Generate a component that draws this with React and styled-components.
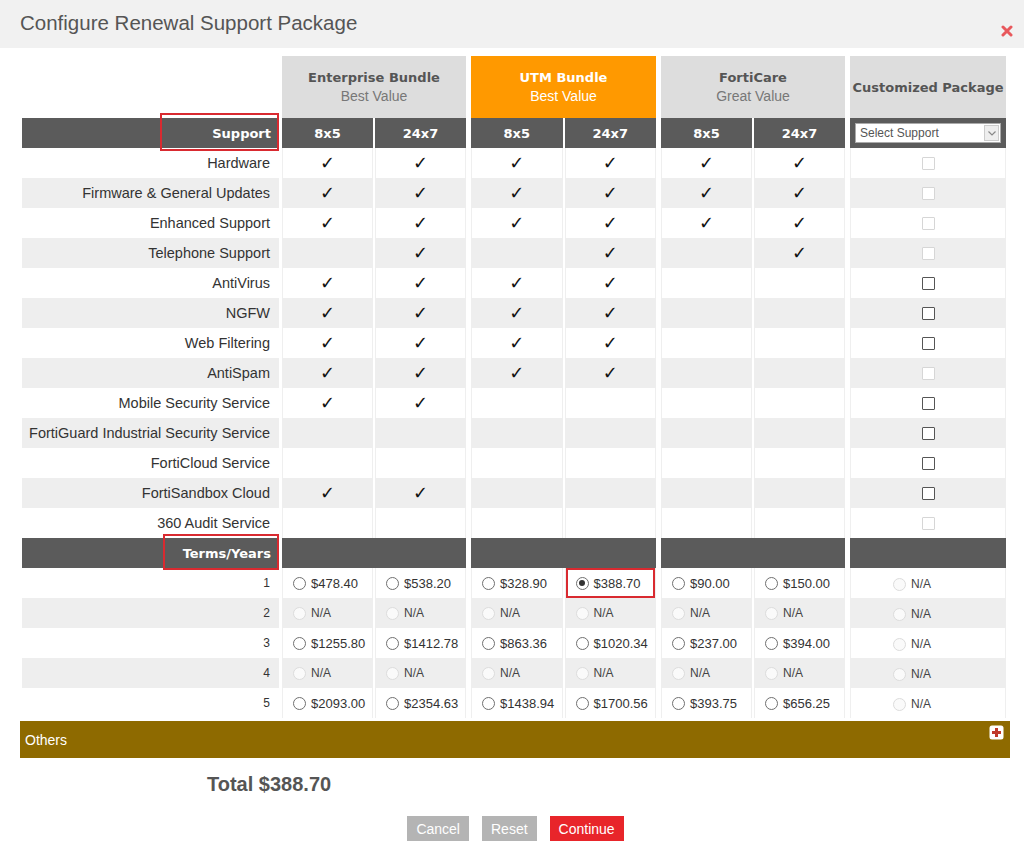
import styled, { createGlobalStyle } from 'styled-components'

const GlobalStyle = createGlobalStyle`
  body {
    margin: 0;
    background: #fff;
    font-family: "Liberation Sans", Arial, sans-serif;
  }
`

const tones = {
  none: 'transparent',
  white: '#ffffff',
  gray: '#eeeeee',
  dark: '#5b5b5b',
  head: '#dddddd',
  accent: '#ff9900',
}

const Dialog = styled.div`
  width: 1024px;
  height: 842px;
  overflow: hidden;
  background: #fff;
`

const TitleBar = styled.div`
  height: 48px;
  background: #f1f1f1;
  display: flex;
  justify-content: space-between;
  align-items: flex-start;
  padding: 0 11px 0 20px;
`

const Title = styled.h2`
  margin: 0;
  font-weight: normal;
  font-size: 20.5px;
  line-height: 46px;
  color: #555;
`

const CloseButton = styled.button`
  border: 0;
  background: none;
  padding: 0;
  margin-top: 25px;
  width: 12px;
  height: 12px;
  display: flex;
`

const Table = styled.div`
  display: flex;
  flex-direction: column;
  padding: 8px 0 0 22px;
`

const Row = styled.div`
  display: flex;
  gap: 3px;
  height: ${p => p.$h || 30}px;
`

const Groups = styled.div`
  display: flex;
  gap: 5px;
`

const Group = styled.div`
  display: flex;
  gap: 2px;
  width: ${p => p.$w}px;
`

const Label = styled.div`
  position: relative;
  width: 257px;
  box-sizing: border-box;
  padding-right: 9px;
  display: flex;
  align-items: center;
  justify-content: flex-end;
  white-space: nowrap;
  background: ${p => tones[p.$tone]};
  color: #333;
  font-size: ${p => (p.$small ? 12 : 14.5)}px;

  ${p => p.$tone === 'dark' && `
    color: #fff;
    font-family: "DejaVu Sans", Verdana, sans-serif;
    font-weight: bold;
    font-size: 13px;
    padding-right: 8px;
  `}
`

const Mark = styled.span`
  position: absolute;
  right: 0;
  top: ${p => p.$top}px;
  bottom: ${p => p.$bottom}px;
  width: ${p => p.$w}px;
  box-sizing: border-box;
  border: 2px solid #d92a30;
  z-index: 1;
  pointer-events: none;
`

const Cell = styled.div`
  flex: 1;
  box-sizing: border-box;
  display: flex;
  align-items: center;
  justify-content: ${p => (p.$left ? 'flex-start' : 'center')};
  padding-left: ${p => (p.$left ? p.$left : 0)}px;
  padding-top: ${p => p.$drop || 0}px;
  background: ${p => tones[p.$tone]};
  border-left: 1px solid ${p => (p.$tone === 'white' ? '#efefef' : 'transparent')};
  border-right: 1px solid ${p => (p.$tone === 'white' ? '#efefef' : 'transparent')};
  box-shadow: ${p => (p.$marked ? 'inset 0 0 0 2px #d92a30' : 'none')};
  color: #333;
  font-size: 13px;
`

const DarkText = styled.span`
  color: #fff;
  font-family: "DejaVu Sans", Verdana, sans-serif;
  font-weight: bold;
  font-size: 13px;
`

const GroupHead = styled.div`
  width: ${p => p.$w}px;
  display: flex;
  flex-direction: column;
  align-items: center;
  justify-content: center;
  gap: 3px;
  background: ${p => (p.$accent ? tones.accent : tones.head)};
`

const HeadName = styled.span`
  font-family: "DejaVu Sans", Verdana, sans-serif;
  font-weight: bold;
  font-size: 13px;
  color: ${p => (p.$accent ? '#fff' : '#555')};
`

const HeadSub = styled.span`
  font-size: 14px;
  color: ${p => (p.$accent ? '#fff' : '#777')};
`

const Check = styled.span`
  font-family: "DejaVu Sans", sans-serif;
  font-size: 18px;
  color: #111;
  line-height: 1;
`

const Box = styled.span`
  width: 13px;
  height: 13px;
  box-sizing: border-box;
  background: #fff;
  border: 1px solid ${p => (p.$off ? '#d6d6d6' : '#555')};
  border-radius: 1px;
`

const SelectBox = styled.div`
  width: 146px;
  height: 20px;
  box-sizing: border-box;
  display: flex;
  align-items: center;
  justify-content: space-between;
  background: #fff;
  border: 1px solid #aaa;
  padding-left: 4px;
  font-size: 12px;
  color: #555;
`

const SelectArrow = styled.span`
  width: 15px;
  height: 16px;
  margin-right: 1px;
  box-sizing: border-box;
  display: flex;
  align-items: center;
  justify-content: center;
  background: #eee;
  border: 1px solid #ccc;
`

const Radio = styled.span`
  position: relative;
  flex: none;
  width: 13px;
  height: 13px;
  box-sizing: border-box;
  border-radius: 50%;
  border: 1px solid ${p => (p.$off ? '#dcdcdc' : '#707070')};
  background: ${p => (p.$off ? '#fafafa' : '#fff')};
  margin-right: 5px;

  &::after {
    content: '';
    display: ${p => (p.$on ? 'block' : 'none')};
    position: absolute;
    left: 2.5px;
    top: 2.5px;
    width: 6px;
    height: 6px;
    border-radius: 50%;
    background: #333;
  }
`

const Price = styled.span`
  font-size: ${p => (p.$na ? 12 : 13)}px;
  color: ${p => (p.$na ? '#444' : '#333')};
`

const OthersBar = styled.div`
  margin: 3px 14px 0 20px;
  height: 37px;
  box-sizing: border-box;
  background: #8e6a00;
  display: flex;
  justify-content: space-between;
  align-items: center;
  padding: 0 6px 0 5px;
  color: #fff;
  font-size: 14px;
`

const PlusIcon = styled.span`
  align-self: flex-start;
  margin-top: 4px;
  display: flex;
`

const Total = styled.div`
  margin-top: 16px;
  padding-left: 207px;
  font-size: 20px;
  line-height: 20px;
  font-weight: bold;
  color: #555;
`

const Actions = styled.div`
  margin-top: 22px;
  padding-left: 7px;
  display: flex;
  justify-content: center;
  gap: 13px;
`

const Button = styled.button`
  height: 25px;
  border: 0;
  padding: 0 9px;
  font-family: inherit;
  font-size: 14px;
  color: #fff;
  background: ${p => (p.$primary ? '#e8252a' : '#b4b4b4')};
`

const bundles = [
  { name: 'Enterprise Bundle', sub: 'Best Value', w: 184 },
  { name: 'UTM Bundle', sub: 'Best Value', w: 185, accent: true },
  { name: 'FortiCare', sub: 'Great Value', w: 184 },
]

const features = [
  { name: 'Hardware', c: [[1, 1], [1, 1], [1, 1]], off: true },
  { name: 'Firmware & General Updates', c: [[1, 1], [1, 1], [1, 1]], off: true },
  { name: 'Enhanced Support', c: [[1, 1], [1, 1], [1, 1]], off: true },
  { name: 'Telephone Support', c: [[0, 1], [0, 1], [0, 1]], off: true },
  { name: 'AntiVirus', c: [[1, 1], [1, 1], [0, 0]] },
  { name: 'NGFW', c: [[1, 1], [1, 1], [0, 0]] },
  { name: 'Web Filtering', c: [[1, 1], [1, 1], [0, 0]] },
  { name: 'AntiSpam', c: [[1, 1], [1, 1], [0, 0]], off: true },
  { name: 'Mobile Security Service', c: [[1, 1], [0, 0], [0, 0]] },
  { name: 'FortiGuard Industrial Security Service', c: [[0, 0], [0, 0], [0, 0]] },
  { name: 'FortiCloud Service', c: [[0, 0], [0, 0], [0, 0]] },
  { name: 'FortiSandbox Cloud', c: [[1, 1], [0, 0], [0, 0]] },
  { name: '360 Audit Service', c: [[0, 0], [0, 0], [0, 0]], off: true },
]

const terms = [
  ['$478.40', '$538.20', '$328.90', '$388.70', '$90.00', '$150.00'],
  null,
  ['$1255.80', '$1412.78', '$863.36', '$1020.34', '$237.00', '$394.00'],
  null,
  ['$2093.00', '$2354.63', '$1438.94', '$1700.56', '$393.75', '$656.25'],
]

const CloseIcon = () => (
  <svg width="12" height="12" viewBox="0 0 12 12">
    <path d="M2 2 L10 10 M10 2 L2 10" stroke="#e8585c" strokeWidth="3" strokeLinecap="round" />
  </svg>
)

const Chevron = () => (
  <svg width="8" height="5" viewBox="0 0 8 5">
    <path d="M0.5 0.5 L4 4 L7.5 0.5" fill="none" stroke="#888" strokeWidth="1.2" />
  </svg>
)

const Plus = () => (
  <svg width="15" height="15" viewBox="0 0 15 15">
    <rect x="0.5" y="0.5" width="14" height="14" rx="2.5" fill="#fff" />
    <path d="M7.5 3 V12 M3 7.5 H12" stroke="#c0392b" strokeWidth="3" />
  </svg>
)

const PriceOption = ({ value, tone, marked, left = 10, drop }) => (
  <Cell $tone={tone} $left={left} $marked={marked} $drop={drop}>
    <Radio $off={!value} $on={marked} />
    <Price $na={!value}>{value || 'N/A'}</Price>
  </Cell>
)

const App = () => {
  return (
    <Dialog>
      <GlobalStyle />
      <TitleBar>
        <Title>Configure Renewal Support Package</Title>
        <CloseButton aria-label="Close"><CloseIcon /></CloseButton>
      </TitleBar>

      <Table>
        <Row $h={62}>
          <Label $tone="none" />
          <Groups>
            {bundles.map(b => (
              <GroupHead key={b.name} $w={b.w} $accent={b.accent}>
                <HeadName $accent={b.accent}>{b.name}</HeadName>
                <HeadSub $accent={b.accent}>{b.sub}</HeadSub>
              </GroupHead>
            ))}
            <GroupHead $w={156}>
              <HeadName>Customized Package</HeadName>
            </GroupHead>
          </Groups>
        </Row>

        <Row>
          <Label $tone="dark">
            Support
            <Mark $w={119} $top={-5} $bottom={-3} />
          </Label>
          <Groups>
            {bundles.map(b => (
              <Group key={b.name} $w={b.w}>
                <Cell $tone="dark"><DarkText>8x5</DarkText></Cell>
                <Cell $tone="dark"><DarkText>24x7</DarkText></Cell>
              </Group>
            ))}
            <Group $w={156}>
              <Cell $tone="dark">
                <SelectBox>
                  Select Support
                  <SelectArrow><Chevron /></SelectArrow>
                </SelectBox>
              </Cell>
            </Group>
          </Groups>
        </Row>

        {features.map((f, i) => {
          const tone = i % 2 ? 'gray' : 'white'
          return (
            <Row key={f.name}>
              <Label $tone={tone}>{f.name}</Label>
              <Groups>
                {bundles.map((b, g) => (
                  <Group key={b.name} $w={b.w}>
                    {f.c[g].map((on, k) => (
                      <Cell key={k} $tone={tone}>{on ? <Check>✓</Check> : null}</Cell>
                    ))}
                  </Group>
                ))}
                <Group $w={156}>
                  <Cell $tone={tone}><Box $off={f.off} /></Cell>
                </Group>
              </Groups>
            </Row>
          )
        })}

        <Row>
          <Label $tone="dark">
            Terms/Years
            <Mark $w={116} $top={-4} $bottom={-2} />
          </Label>
          <Groups>
            {bundles.map(b => (
              <Group key={b.name} $w={b.w}>
                <Cell $tone="dark" />
              </Group>
            ))}
            <Group $w={156}>
              <Cell $tone="dark" />
            </Group>
          </Groups>
        </Row>

        {terms.map((prices, i) => {
          const tone = i % 2 ? 'gray' : 'white'
          return (
            <Row key={i}>
              <Label $tone={tone} $small>{i + 1}</Label>
              <Groups>
                {bundles.map((b, g) => (
                  <Group key={b.name} $w={b.w}>
                    {[0, 1].map(k => (
                      <PriceOption
                        key={k}
                        tone={tone}
                        value={prices && prices[g * 2 + k]}
                        marked={i === 0 && g === 1 && k === 1}
                      />
                    ))}
                  </Group>
                ))}
                <Group $w={156}>
                  <PriceOption tone={tone} left={42} drop={2} />
                </Group>
              </Groups>
            </Row>
          )
        })}
      </Table>

      <OthersBar>
        Others
        <PlusIcon><Plus /></PlusIcon>
      </OthersBar>

      <Total>Total $388.70</Total>

      <Actions>
        <Button>Cancel</Button>
        <Button>Reset</Button>
        <Button $primary>Continue</Button>
      </Actions>
    </Dialog>
  )
}

export default App
